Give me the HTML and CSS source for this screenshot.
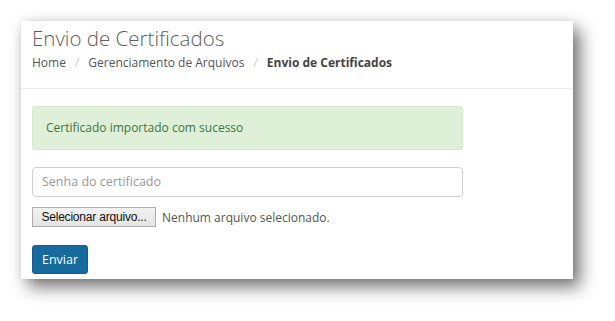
FILE: index.html
```html
<!DOCTYPE html>
<html lang="pt-BR">
<head>
<meta charset="utf-8">
<title>Envio de Certificados</title>
<link rel="stylesheet" href="styles.css">
</head>
<body>
<div class="card">
  <div class="card-header">
    <h1 class="title">Envio de Certificados</h1>
    <ol class="breadcrumb">
      <li class="crumb">Home</li>
      <li class="sep">/</li>
      <li class="crumb">Gerenciamento de Arquivos</li>
      <li class="sep">/</li>
      <li class="crumb active">Envio de Certificados</li>
    </ol>
  </div>
  <div class="card-body">
    <div class="alert">Certificado importado com sucesso</div>
    <div class="input">Senha do certificado</div>
    <div class="file-row">
      <span class="file-btn">Selecionar arquivo...</span>
      <span class="file-name">Nenhum arquivo selecionado.</span>
    </div>
    <span class="btn">Enviar</span>
  </div>
</div>
</body>
</html>
```

FILE: styles.css
```css
html {
  margin: 0;
  padding: 0;
  background: #ffffff;
  min-height: 321px;
}
body {
  margin: 0;
  min-height: 321px;
  box-sizing: border-box;
  font-family: "Open Sans", "DejaVu Sans", sans-serif;
  color: #555;
  padding: 21px 0 0 21px;
}
.card {
  width: 552px;
  height: 258px;
  box-sizing: border-box;
  background: #fff;
  box-shadow: 7px 8px 16px rgba(0,0,0,0.55), 0 0 10px rgba(0,0,0,0.07);
}
.card-header {
  padding: 5px 11px 0 11px;
  height: 68px;
  box-sizing: border-box;
  border-bottom: 1px solid #ececec;
}
.title {
  margin: 0;
  font-size: 20.5px;
  line-height: 25px;
  font-weight: 300;
  color: #5e5e5e;
}
.breadcrumb {
  list-style: none;
  margin: 3px 0 0 0;
  padding: 0;
  display: flex;
  font-size: 12px;
  line-height: 18px;
}
.crumb { color: #555; }
.sep {
  color: #c8c8c8;
  padding: 0 9px;
}
.active {
  font-weight: 700;
  color: #444;
}
.card-body {
  padding: 17px 11px 0 11px;
}
.alert {
  width: 431px;
  height: 44px;
  box-sizing: border-box;
  background: #dff0d8;
  border: 1px solid #d6e9c6;
  border-radius: 3px;
  color: #3c763d;
  font-size: 12px;
  line-height: 18px;
  padding: 12px 13px;
}
.input {
  margin-top: 17px;
  width: 431px;
  height: 30px;
  box-sizing: border-box;
  border: 1px solid #cfcfcf;
  border-radius: 4px;
  color: #999;
  font-size: 12.5px;
  line-height: 28px;
  padding: 0 9px;
}
.file-row {
  margin-top: 10px;
  display: flex;
  align-items: center;
  height: 20px;
}
.file-btn {
  width: 124px;
  height: 20px;
  box-sizing: border-box;
  border: 1px solid #adadad;
  background: linear-gradient(#f2f2f2, #e3e3e3);
  font-family: "Liberation Sans", Arial, sans-serif;
  font-size: 12px;
  line-height: 18px;
  color: #111;
  text-align: center;
  letter-spacing: -0.2px;
}
.file-name {
  margin-left: 6px;
  font-size: 12px;
  color: #555;
}
.btn {
  display: inline-block;
  margin-top: 18px;
  width: 56px;
  height: 29px;
  box-sizing: border-box;
  background: #176a9c;
  border: 1px solid #135d8a;
  border-radius: 3px;
  color: #fff;
  font-size: 12.5px;
  line-height: 27px;
  text-align: center;
}
```
